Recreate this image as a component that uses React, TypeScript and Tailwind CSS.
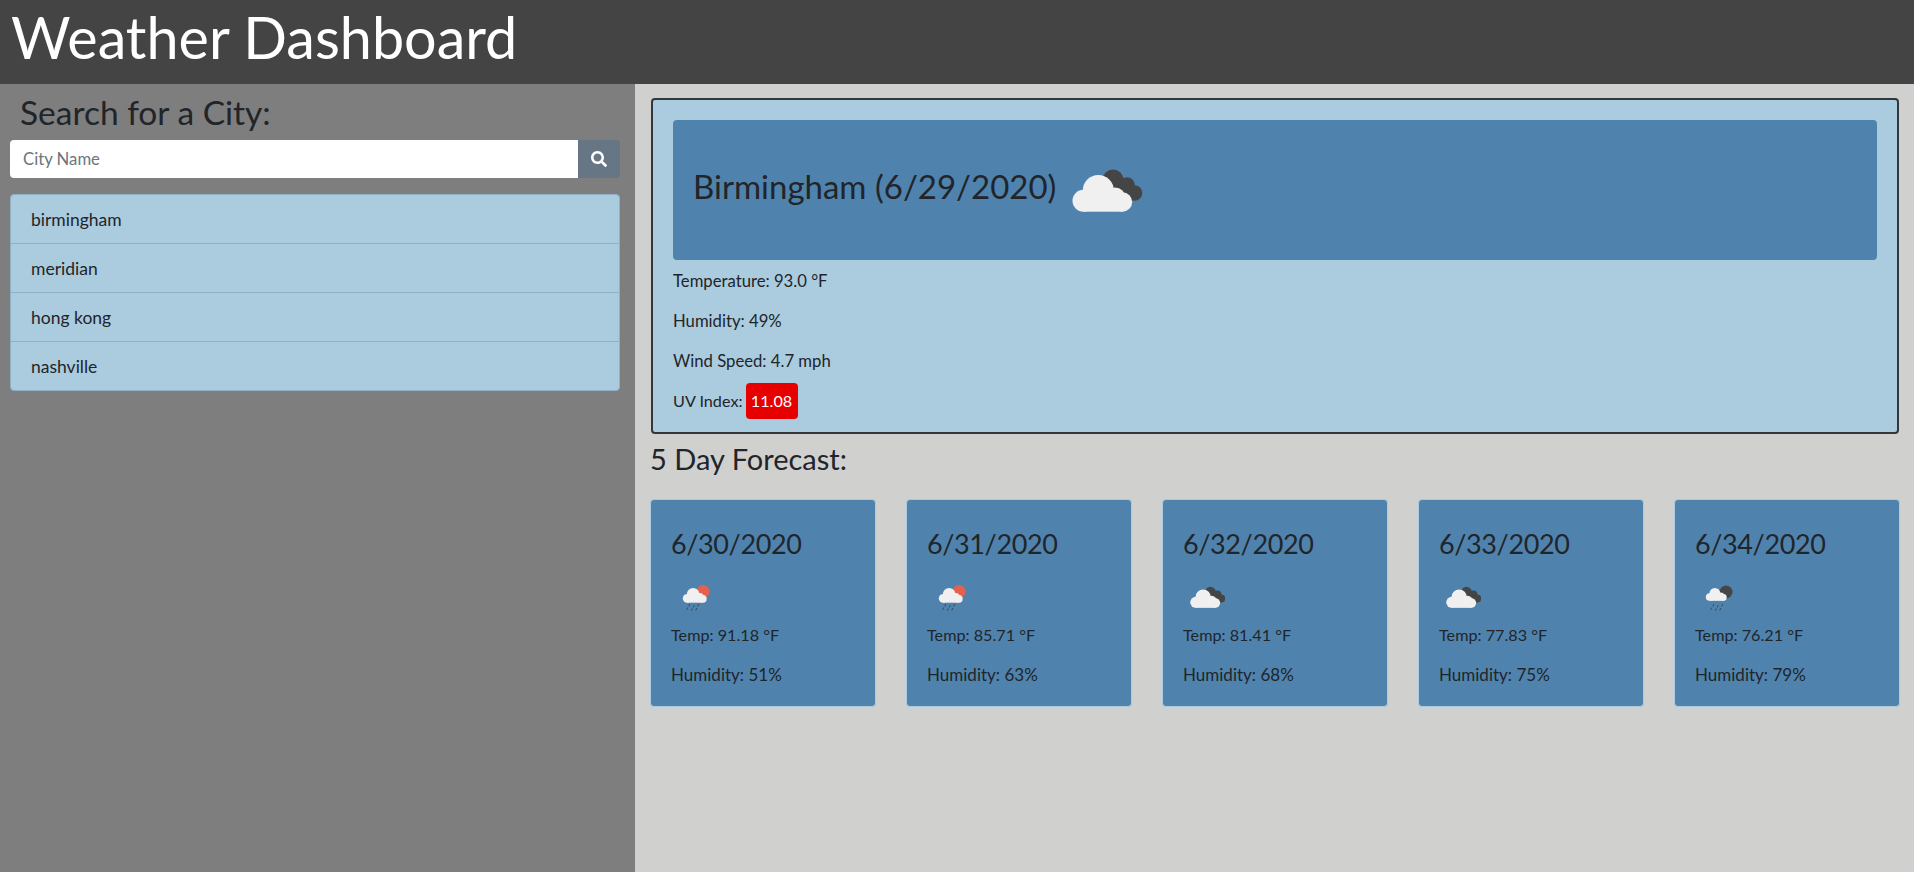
import { FaSearch } from "react-icons/fa";

const cities = ["birmingham", "meridian", "hong kong", "nashville"];

const forecast = [
  { date: "6/30/2020", temp: "91.18", humidity: "51", icon: "rainSun" },
  { date: "6/31/2020", temp: "85.71", humidity: "63", icon: "rainSun" },
  { date: "6/32/2020", temp: "81.41", humidity: "68", icon: "clouds" },
  { date: "6/33/2020", temp: "77.83", humidity: "75", icon: "clouds" },
  { date: "6/34/2020", temp: "76.21", humidity: "79", icon: "rainDark" },
];

function WhiteCloud() {
  return (
    <g fill="#f0f0f0">
      <circle cx="25.5" cy="60.7" r="11" />
      <circle cx="40.3" cy="50.5" r="15.5" />
      <circle cx="57" cy="58" r="10.5" />
      <circle cx="64.5" cy="62" r="9.7" />
      <rect x="25" y="58" width="40" height="13.7" />
    </g>
  );
}

function Rain() {
  return (
    <g stroke="#3f4a55" strokeWidth="2" strokeLinecap="round">
      <path d="M37 65l-1 3" />
      <path d="M46 67l-1 3" />
      <path d="M55 65l-1 3" />
      <path d="M33 72l-1 3" />
      <path d="M42 74l-1 3" />
      <path d="M51 73l-1 3" />
    </g>
  );
}

function WeatherIcon({ kind, size }: { kind: string; size: string }) {
  return (
    <svg viewBox="0 0 100 100" className={size}>
      {kind === "clouds" && (
        <>
          <g fill="#454545">
            <circle cx="55" cy="40" r="10.5" />
            <circle cx="69" cy="45" r="7.8" />
            <circle cx="76.5" cy="53" r="7.8" />
            <path d="M50 38l20 2 8 14-16 6z" />
          </g>
          <WhiteCloud />
        </>
      )}
      {kind === "rainSun" && (
        <>
          <circle cx="64" cy="39" r="13" fill="#e8604c" />
          <g transform="translate(12 4) scale(0.8)">
            <WhiteCloud />
          </g>
          <Rain />
        </>
      )}
      {kind === "rainDark" && (
        <>
          <circle cx="62" cy="40" r="13" fill="#454545" />
          <g transform="translate(11.5 7.5) scale(0.7)">
            <WhiteCloud />
          </g>
          <Rain />
        </>
      )}
    </svg>
  );
}

export default function App() {
  return (
    <div className="flex h-screen flex-col bg-[#d0d0ce] font-['Lato',sans-serif] text-[16.7px] text-[#212529]">
      <header className="flex h-[84px] shrink-0 items-center bg-[#444444] pb-[11px] pl-[11px]">
        <h1 className="text-[57.5px] leading-none text-white">Weather Dashboard</h1>
      </header>

      <div className="flex min-h-0 flex-1">
        <aside className="w-[635px] shrink-0 bg-[#7e7e7e] pl-[10px] pr-[15px] pt-[9px]">
          <h2 className="mb-[9px] pl-[10px] text-[33.5px] leading-[38px]">Search for a City:</h2>
          <div className="flex h-[38px]">
            <input
              placeholder="City Name"
              className="min-w-0 flex-1 rounded-l bg-white px-[13px] pt-[2px] text-[16.7px] text-[#495057] outline-none placeholder:text-[#6c757d]"
            />
            <button className="flex w-[42px] items-center justify-center rounded-r bg-[#667684] text-white">
              <FaSearch className="text-base" />
            </button>
          </div>
          <ul className="mt-4 overflow-hidden rounded border border-[#8fb0c6] bg-[#abcbde] text-[17.5px]">
            {cities.map((city) => (
              <li key={city} className="border-b border-[#8fb0c6] px-5 pb-[11px] pt-[13px] leading-6 last:border-b-0">
                {city}
              </li>
            ))}
          </ul>
        </aside>

        <main className="min-w-0 flex-1 pl-4 pr-[15px] pt-[14px]">
          <section className="h-[336px] rounded-sm border-2 border-[#33373b] bg-[#abcbde] px-5 pt-5">
            <div className="flex h-[140px] items-center rounded-sm bg-[#4f83ae] px-5">
              <h2 className="-mt-[9px] text-[33px] leading-[40px]">Birmingham (6/29/2020)</h2>
              <WeatherIcon kind="clouds" size="ml-[2px] h-[100px] w-[100px]" />
            </div>
            <div className="mt-[9px] flex flex-col gap-4 leading-6">
              <p>Temperature: 93.0 °F</p>
              <p>Humidity: 49%</p>
              <p>Wind Speed: 4.7 mph</p>
              <p className="flex h-6 items-center text-[16.2px]">
                UV Index:
                <span className="-mt-px ml-[3px] flex h-[36px] w-[52px] items-center justify-center rounded-sm bg-[#e60000] text-white">
                  11.08
                </span>
              </p>
            </div>
          </section>

          <h3 className="-ml-px mt-2 text-[29px] leading-[34px]">5 Day Forecast:</h3>

          <div className="-mx-px mt-[23px] flex justify-between">
            {forecast.map((day) => (
              <div key={day.date} className="h-[208px] w-[226px] rounded border border-[#abcbde] bg-[#4f83ae] px-5 pt-5">
                <div className="text-[27px] leading-[48px] tracking-[-0.4px]">{day.date}</div>
                <WeatherIcon kind={day.icon} size="mt-[4px] h-[50px] w-[50px]" />
                <p className="mt-px text-[16.2px] leading-6">Temp: {day.temp} °F</p>
                <p className="mt-4 text-[17px] leading-6">Humidity: {day.humidity}%</p>
              </div>
            ))}
          </div>
        </main>
      </div>
    </div>
  );
}
